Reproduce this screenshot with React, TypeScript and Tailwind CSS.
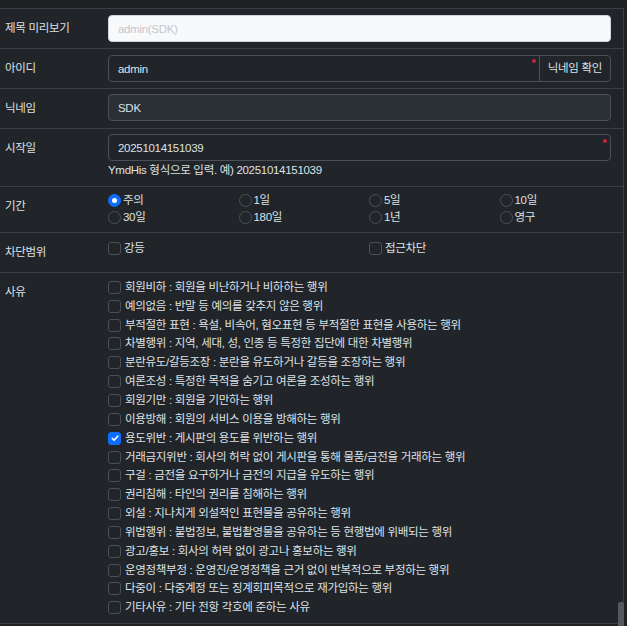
import { useState } from 'react';

const FONT = { fontFamily: '"Liberation Sans", "Noto Sans CJK KR", sans-serif' };

const periods = ['주의', '1일', '5일', '10일', '30일', '180일', '1년', '영구'];

const reasons = [
  '회원비하 : 회원을 비난하거나 비하하는 행위',
  '예의없음 : 반말 등 예의를 갖추지 않은 행위',
  '부적절한 표현 : 욕설, 비속어, 혐오표현 등 부적절한 표현을 사용하는 행위',
  '차별행위 : 지역, 세대, 성, 인종 등 특정한 집단에 대한 차별행위',
  '분란유도/갈등조장 : 분란을 유도하거나 갈등을 조장하는 행위',
  '여론조성 : 특정한 목적을 숨기고 여론을 조성하는 행위',
  '회원기만 : 회원을 기만하는 행위',
  '이용방해 : 회원의 서비스 이용을 방해하는 행위',
  '용도위반 : 게시판의 용도를 위반하는 행위',
  '거래금지위반 : 회사의 허락 없이 게시판을 통해 물품/금전을 거래하는 행위',
  '구걸 : 금전을 요구하거나 금전의 지급을 유도하는 행위',
  '권리침해 : 타인의 권리를 침해하는 행위',
  '외설 : 지나치게 외설적인 표현물을 공유하는 행위',
  '위법행위 : 불법정보, 불법촬영물을 공유하는 등 현행법에 위배되는 행위',
  '광고/홍보 : 회사의 허락 없이 광고나 홍보하는 행위',
  '운영정책부정 : 운영진/운영정책을 근거 없이 반복적으로 부정하는 행위',
  '다중이 : 다중계정 또는 징계회피목적으로 재가입하는 행위',
  '기타사유 : 기타 전항 각호에 준하는 사유',
];

const Row = ({ label, h, pt = 'pt-[6px]', children }: { label: string; h: string; pt?: string; children: React.ReactNode }) => (
  <div className={`flex border-b border-[#3a3f44] ${h}`}>
    <div className="w-[108px] shrink-0 pl-[5px] pt-[11px] leading-[16px] text-[#dee2e6]">{label}</div>
    <div className={`flex-1 min-w-0 pr-[12px] ${pt}`}>{children}</div>
  </div>
);

const Check = ({ checked, onClick }: { checked: boolean; onClick: () => void }) => (
  <span
    onClick={onClick}
    className={`inline-flex items-center justify-center w-[13px] h-[13px] rounded-[3px] border shrink-0 ${
      checked ? 'bg-[#0d6efd] border-[#0d6efd]' : 'bg-[#212529] border-[#495057]'
    }`}
  >
    {checked && (
      <svg viewBox="0 0 16 16" className="w-[10px] h-[10px]">
        <path d="M3.5 8.5l3 3 6-6.5" fill="none" stroke="#fff" strokeWidth="2.4" strokeLinecap="round" strokeLinejoin="round" />
      </svg>
    )}
  </span>
);

const Radio = ({ checked }: { checked: boolean }) => (
  <span
    className={`inline-flex items-center justify-center w-[13px] h-[13px] rounded-full border shrink-0 ${
      checked ? 'bg-[#0d6efd] border-[#0d6efd]' : 'bg-[#212529] border-[#495057]'
    }`}
  >
    {checked && <span className="w-[5px] h-[5px] rounded-full bg-white" />}
  </span>
);

export default function App() {
  const [period, setPeriod] = useState('주의');
  const [scope, setScope] = useState<string[]>([]);
  const [picked, setPicked] = useState<number[]>([8]);

  const toggleReason = (i: number) =>
    setPicked((p) => (p.includes(i) ? p.filter((x) => x !== i) : [...p, i]));
  const toggleScope = (s: string) =>
    setScope((p) => (p.includes(s) ? p.filter((x) => x !== s) : [...p, s]));

  return (
    <div style={FONT} className="relative w-[627px] h-[626px] overflow-hidden bg-[#1e2124] text-[11.5px] leading-[17px] tracking-[-0.3px] text-[#dee2e6]">
      <div className="mt-[8px] w-[624px] border-t border-r border-[#3a3f44] bg-[#212529]">
        <Row label="제목 미리보기" h="h-[40px]">
          <input
            className="block w-full h-[27px] rounded-[4px] border border-[#ced4da] bg-[#f8f9fa] px-[9px] outline-none placeholder:text-[#c4c8cc]"
            placeholder="admin(SDK)"
          />
        </Row>

        <Row label="아이디" h="h-[40px]">
          <div className="flex h-[27px]">
            <div className="relative flex-1">
              <input
                defaultValue="admin"
                className="block w-full h-full rounded-l-[4px] border border-[#495057] bg-[#212529] px-[9px] outline-none text-[#dee2e6]"
              />
              <span className="absolute right-[4px] top-[4px] w-[4px] h-[4px] rounded-full bg-[#c8233b]" />
            </div>
            <button className="h-full px-[8px] -ml-px rounded-r-[4px] border border-[#495057] bg-transparent text-[#dee2e6]">
              닉네임 확인
            </button>
          </div>
        </Row>

        <Row label="닉네임" h="h-[40px]" pt="pt-[5px]">
          <input
            readOnly
            defaultValue="SDK"
            className="block w-full h-[27px] rounded-[4px] border border-[#495057] bg-[#2b3035] px-[9px] outline-none text-[#dee2e6]"
          />
        </Row>

        <Row label="시작일" h="h-[58px]" pt="pt-[5px]">
          <div className="relative">
            <input
              defaultValue="20251014151039"
              className="block w-full h-[27px] rounded-[4px] border border-[#495057] bg-[#212529] px-[9px] outline-none text-[#dee2e6]"
            />
            <span className="absolute right-[4px] top-[5px] w-[4px] h-[4px] rounded-full bg-[#c8233b]" />
          </div>
          <div className="mt-[1px]">YmdHis 형식으로 입력. 예) 20251014151039</div>
        </Row>

        <Row label="기간" h="h-[46px]" pt="pt-[5px]">
          <div className="grid grid-cols-[130.5px_130.5px_130.5px_130.5px]">
            {periods.map((p) => (
              <label key={p} onClick={() => setPeriod(p)} className="flex items-center gap-[2px] h-[17px]">
                <Radio checked={period === p} />
                <span>{p}</span>
              </label>
            ))}
          </div>
        </Row>

        <Row label="차단범위" h="h-[40px]" pt="pt-[7px]">
          <div className="grid grid-cols-[261px_261px]">
            {['강등', '접근차단'].map((s) => (
              <label key={s} className="flex items-center gap-[3px] h-[17px]">
                <Check checked={scope.includes(s)} onClick={() => toggleScope(s)} />
                <span>{s}</span>
              </label>
            ))}
          </div>
        </Row>

        <Row label="사유" h="h-[351px]" pt="pt-[5px]">
          {reasons.map((r, i) => (
            <label key={r} className="flex items-center gap-[4px] h-[18.85px] whitespace-nowrap">
              <Check checked={picked.includes(i)} onClick={() => toggleReason(i)} />
              <span>{r}</span>
            </label>
          ))}
        </Row>
      </div>
      <div className="absolute right-[3px] bottom-0 w-[6px] h-[24px] rounded-t-[2px] bg-[#55595d]" />
    </div>
  );
}
